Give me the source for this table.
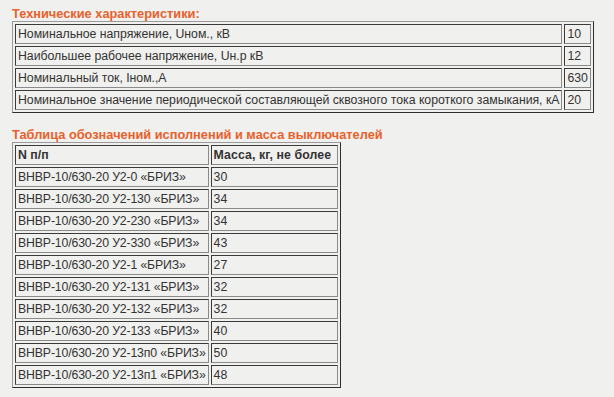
export default function App() {
  const specs = [
    ["Номинальное напряжение, Uном., кВ", "10"],
    ["Наибольшее рабочее напряжение, Uн.р кВ", "12"],
    ["Номинальный ток, Iном.,А", "630"],
    ["Номинальное значение периодической составляющей сквозного тока короткого замыкания, кА", "20"],
  ];

  const models = [
    ["ВНВР-10/630-20 У2-0 «БРИЗ»", "30"],
    ["ВНВР-10/630-20 У2-130 «БРИЗ»", "34"],
    ["ВНВР-10/630-20 У2-230 «БРИЗ»", "34"],
    ["ВНВР-10/630-20 У2-330 «БРИЗ»", "43"],
    ["ВНВР-10/630-20 У2-1 «БРИЗ»", "27"],
    ["ВНВР-10/630-20 У2-131 «БРИЗ»", "32"],
    ["ВНВР-10/630-20 У2-132 «БРИЗ»", "32"],
    ["ВНВР-10/630-20 У2-133 «БРИЗ»", "40"],
    ["ВНВР-10/630-20 У2-13п0 «БРИЗ»", "50"],
    ["ВНВР-10/630-20 У2-13п1 «БРИЗ»", "48"],
  ];

  // inset cell look: dark top/left, lighter bottom/right
  const cell =
    "h-[20px] border border-t-[#3a3a3a] border-l-[#3a3a3a] border-r-[#8a8a8a] border-b-[#8a8a8a] px-[2px] py-0 text-left align-middle whitespace-nowrap";
  const table =
    "border-separate border-spacing-[2px] border border-t-[#9a9a9a] border-l-[#9a9a9a] border-r-[#2e2e2e] border-b-[#2e2e2e]";

  return (
    <div className="min-h-[397px] w-[614px] bg-[#f0f0ee] pl-[12px] pt-[7px] font-['Liberation_Sans',Arial,sans-serif] text-[12.3px] leading-[14px] text-[#333]">
      <div className="text-[12.8px] font-bold leading-[14px] text-[#e8612c]">Технические характеристики:</div>
      <table className={table}>
        <tbody>
          {specs.map((row, i) => (
            <tr key={i}>
              <td className={cell + " w-[546px] tracking-[-0.03px]"}>{row[0]}</td>
              <td className={cell + " w-[26px]"}>{row[1]}</td>
            </tr>
          ))}
        </tbody>
      </table>

      <div className="mt-[15px] text-[12.8px] font-bold leading-[14px] text-[#e8612c]">
        Таблица обозначений исполнений и масса выключателей
      </div>
      <table className={table}>
        <tbody>
          <tr>
            <th className={cell + " w-[193px] font-bold"}>N п/п</th>
            <th className={cell + " w-[127px] font-bold tracking-[0.1px]"}>Масса, кг, не более</th>
          </tr>
          {models.map((row, i) => (
            <tr key={i}>
              <td className={cell + " tracking-[-0.15px]"}>{row[0]}</td>
              <td className={cell}>{row[1]}</td>
            </tr>
          ))}
        </tbody>
      </table>
    </div>
  );
}
